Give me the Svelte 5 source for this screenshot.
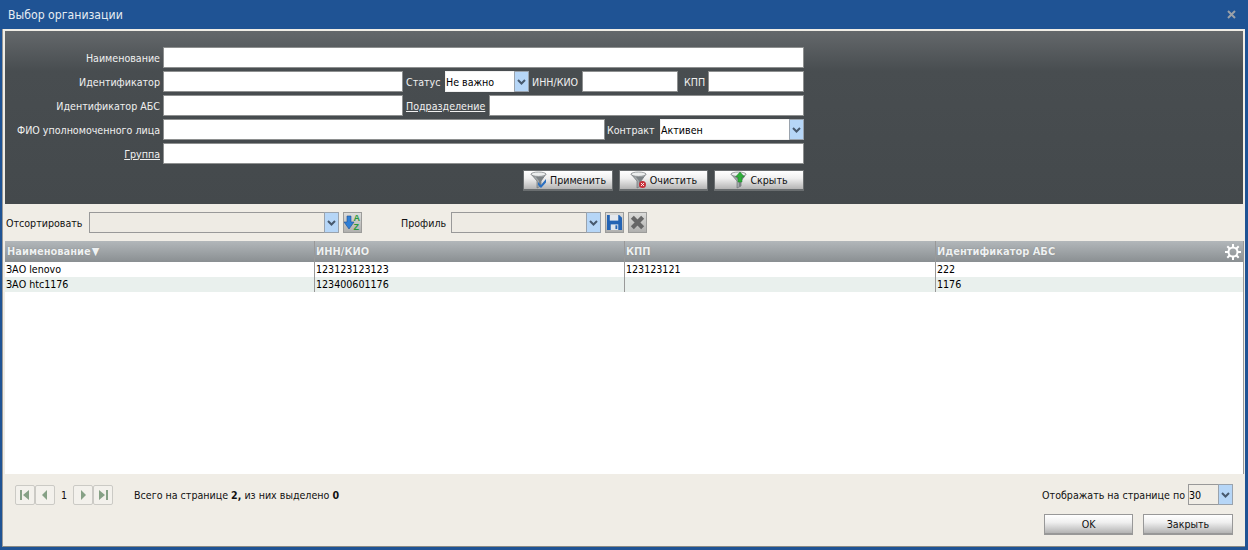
<script>
  const columns = ["ИНН/КИО", "КПП", "Идентификатор АБС"];
  const rows = [
    ["ЗАО lenovo", "123123123123", "123123121", "222"],
    ["ЗАО htc1176", "123400601176", "", "1176"],
  ];
</script>

{#snippet dropdown(cls, value, disabled)}
  <div class="select {cls}" class:disabled>
    <span class="value">{value}</span>
    <span class="arrow">
      <svg width="9" height="6" viewBox="0 0 9 6"><path d="M1 1l3.500 3.500L8 1" fill="none" stroke="#47596e" stroke-width="2" /></svg>
    </span>
  </div>
{/snippet}

{#snippet funnel()}
  <path d="M1 3h15l-5 7v5l-4 2v-7z" fill="#a3a8ab" stroke="#6d7275" stroke-width=".7" />
  <path d="M6 6l3 4v6l2-1v-5l3-4z" fill="#7c8285" />
  <ellipse cx="8.500" cy="3.200" rx="7.500" ry="2.200" fill="#eceeee" stroke="#777b7e" stroke-width=".7" />
{/snippet}

<div class="window">
  <div class="title">
    <span>Выбор организации</span>
    <svg class="close" width="9" height="9" viewBox="0 0 9 9"><path d="M1 1l7 7M8 1l-7 7" stroke="#9aa0a8" stroke-width="2" /></svg>
  </div>

  <div class="body">
    <div class="filter">
      <div class="form">
        <div class="row">
          <span class="label main">Наименование</span>
          <input class="grow" />
        </div>
        <div class="row">
          <span class="label main">Идентификатор</span>
          <input class="w240" />
          <span class="label status">Статус</span>
          {@render dropdown("w84 white", "Не важно", false)}
          <span class="label inn">ИНН/КИО</span>
          <input class="w96" />
          <span class="label kpp">КПП</span>
          <input class="w96" />
        </div>
        <div class="row">
          <span class="label main">Идентификатор АБС</span>
          <input class="w240" />
          <a class="label division" href="#top">Подразделение</a>
          <input class="grow" />
        </div>
        <div class="row">
          <span class="label main">ФИО уполномоченного лица</span>
          <input class="w442" />
          <span class="label contract">Контракт</span>
          {@render dropdown("grow white", "Активен", false)}
        </div>
        <div class="row">
          <a class="label main" href="#top">Группа</a>
          <input class="grow" />
        </div>
        <div class="actions">
          <button class="btn dark">
            <svg width="18" height="18" viewBox="0 0 18 18">
              {@render funnel()}
              <path d="M8 11l3 3 5-6v3.500L11 17l-3-3z" fill="#2a6fc0" />
            </svg>
            Применить
          </button>
          <button class="btn dark narrow">
            <svg width="18" height="18" viewBox="0 0 18 18">
              {@render funnel()}
              <circle cx="12.500" cy="13.500" r="3.500" fill="#c8303a" />
              <path d="M11 12l3 3M14 12l-3 3" stroke="#fff" stroke-width=".9" />
            </svg>
            Очистить
          </button>
          <button class="btn dark">
            <svg width="18" height="18" viewBox="0 0 18 18">
              {@render funnel()}
              <path d="M10 1l4.500 5H12v5H8V6H5.500z" fill="#2fae3a" stroke="#1d7d28" stroke-width=".5" />
            </svg>
            Скрыть
          </button>
        </div>
      </div>
    </div>

    <div class="toolbar">
      <span class="sort-label">Отсортировать</span>
      {@render dropdown("w250", "", true)}
      <button class="tool">
        <svg width="17" height="19" viewBox="0 0 17 19">
          <path d="M3 3h4v6h3l-5 7-5-7h3z" fill="#2f7fd6" stroke="#1d4f96" stroke-width=".6" />
          <text x="9.500" y="8" class="az">A</text>
          <text x="9.500" y="17" class="az">Z</text>
        </svg>
      </button>
      <span class="profile-label">Профиль</span>
      {@render dropdown("w150", "", true)}
      <button class="tool">
        <svg width="15" height="15" viewBox="0 0 16 16">
          <path d="M0 0h13l3 3v13H0z" fill="#2464b4" />
          <path d="M3 0h9v6H3z" fill="#e4e8ee" />
          <path d="M4 10h8v6H4z" fill="#dfe5ec" />
          <path d="M9 11h2v4H9z" fill="#2464b4" />
        </svg>
      </button>
      <button class="tool">
        <svg width="15" height="15" viewBox="0 0 16 16"><path d="M2.500 2.500l11 11M13.500 2.500l-11 11" stroke="#666" stroke-width="4.500" /></svg>
      </button>
    </div>

    <div class="grid">
      <div class="head">
        <div class="cell c1">Наименование<span class="sort">▼</span></div>
        {#each columns as col}
          <div class="cell">{col}</div>
        {/each}
        <svg class="gear" width="16" height="16" viewBox="0 0 16 16">
          <circle cx="8" cy="8" r="4.500" fill="none" stroke="#fff" stroke-width="2" />
          <path d="M8 0v3M8 13v3M0 8h3M13 8h3M2.300 2.300l2.200 2.200M11.500 11.500l2.200 2.200M13.700 2.300l-2.200 2.200M4.500 11.500l-2.200 2.200" stroke="#fff" stroke-width="2" />
        </svg>
      </div>
      {#each rows as row, i}
        <div class="line" class:alt={i % 2 === 1}>
          {#each row as value, j}
            <div class="cell" class:c1={j === 0}>{value}</div>
          {/each}
        </div>
      {/each}
    </div>

    <div class="footer">
      <div class="pager-row">
        <div class="pager">
          <button class="page">
            <svg width="10" height="10" viewBox="0 0 10 10"><path d="M0 0h2v10H0zM9 0v10L3 5z" fill="#86a186" /></svg>
          </button>
          <button class="page">
            <svg width="10" height="10" viewBox="0 0 10 10"><path d="M7 0v10L2 5z" fill="#86a186" /></svg>
          </button>
          <span class="num">1</span>
          <button class="page">
            <svg width="10" height="10" viewBox="0 0 10 10"><path d="M3 0v10l5-5z" fill="#86a186" /></svg>
          </button>
          <button class="page">
            <svg width="10" height="10" viewBox="0 0 10 10"><path d="M1 0v10l6-5zM8 0h2v10H8z" fill="#86a186" /></svg>
          </button>
        </div>
        <span class="total">Всего на странице <b>2,</b> из них выделено <b>0</b></span>
        <span class="per-page">Отображать на странице по</span>
        {@render dropdown("w45", "30", false)}
      </div>
      <div class="buttons">
        <button class="btn light narrow">OK</button>
        <button class="btn light">Закрыть</button>
      </div>
    </div>
  </div>
</div>

<style>
  :global(body) {
    margin: 0;
    background: #1f5394;
  }

  .window {
    width: 1248px;
    height: 550px;
    display: flex;
    flex-direction: column;
    background: #1f5394;
    font-family: "DejaVu Sans Condensed", "DejaVu Sans", sans-serif;
    font-stretch: condensed;
    font-size: 10.6px;
    color: #111;
  }

  .title {
    height: 29px;
    flex: none;
    display: flex;
    align-items: center;
    justify-content: space-between;
    padding: 0 12px 0 8px;
    color: #e6ecf2;
    font-size: 12.2px;
  }

  .body {
    flex: 1;
    display: flex;
    flex-direction: column;
    margin: 0 3px 3px 2px;
    padding: 2px 2px 0 2px;
    background: #f0ede6;
    border-left: 1px solid #999;
    border-bottom: 1px solid #8a8a84;
    box-sizing: border-box;
    min-height: 0;
  }

  .filter {
    height: 173px;
    flex: none;
    box-sizing: border-box;
    padding: 16px 0 0 0;
    background: linear-gradient(#64686b, #484d50 40px, #44494c);
  }

  .form {
    width: 799px;
    display: flex;
    flex-direction: column;
    gap: 3px;
  }

  .row {
    display: flex;
    height: 21px;
    align-items: center;
  }

  .label {
    color: #f0f0f0;
    white-space: nowrap;
  }

  .main {
    width: 155px;
    flex: none;
    text-align: right;
    margin-right: 3px;
  }

  .status {
    width: 36px;
    margin: 0 3px;
  }

  .division {
    width: 80px;
    margin: 0 3px;
  }

  .inn {
    width: 47px;
    margin: 0 3px;
  }

  .kpp {
    width: 21px;
    margin: 0 3px 0 6px;
  }

  .contract {
    width: 50px;
    margin: 0 3px 0 2px;
  }

  input {
    height: 21px;
    box-sizing: border-box;
    border: 1px solid #8e9090;
    background: #fff;
    padding: 0 2px;
    margin: 0;
    outline: none;
    flex: none;
  }

  .grow {
    flex: 1;
    min-width: 0;
  }

  .w240 {
    width: 240px;
  }

  .w96 {
    width: 96px;
  }

  .w442 {
    width: 442px;
  }

  .actions {
    display: flex;
    justify-content: flex-end;
    gap: 6px;
    margin-top: 3px;
  }

  .select {
    height: 21px;
    box-sizing: border-box;
    display: flex;
    align-items: center;
    border: 1px solid #999;
    flex: none;
  }

  .select.grow {
    flex: 1;
  }

  .select.white {
    border-color: #f0f0f0;
    background: #fff;
  }

  .select.disabled {
    background: #eeebe4;
  }

  .w84 {
    width: 84px;
  }

  .w250 {
    width: 250px;
  }

  .w150 {
    width: 150px;
  }

  .w45 {
    width: 45px;
  }

  .value {
    flex: 1;
    white-space: nowrap;
    color: #000;
  }

  .arrow {
    width: 15px;
    align-self: stretch;
    margin: -1px -1px -1px 0;
    display: flex;
    align-items: center;
    justify-content: center;
    background: #b6d6f7;
    border: 1px solid #9aa3ad;
    box-sizing: border-box;
  }

  .btn {
    height: 21px;
    width: 90px;
    display: flex;
    align-items: center;
    justify-content: center;
    gap: 2px;
    padding: 0;
    font: inherit;
    color: #111;
    box-sizing: border-box;
    background: linear-gradient(#fff, #f0f0f0 40%, #b4b4b4);
    border: 2px solid #8f8f8f;
    border-width: 1px 1px 2px 1px;
  }

  .btn.narrow {
    width: 89px;
  }

  .btn.dark {
    border-color: #6a6e70;
  }

  .btn.light {
    border-color: #989898;
  }

  .toolbar {
    height: 37px;
    flex: none;
    display: flex;
    align-items: center;
  }

  .sort-label {
    width: 84px;
    margin-left: 1px;
    margin-right: -1px;
  }

  .tool {
    width: 19px;
    height: 21px;
    padding: 0;
    margin-left: 4px;
    display: flex;
    align-items: center;
    justify-content: center;
    background: linear-gradient(#dcdcda, #b0b0ae);
    border: 1px solid #9c9c9a;
    box-sizing: border-box;
  }

  .az {
    font-size: 9px;
    font-weight: bold;
    fill: #2a9a3a;
  }

  .profile-label {
    margin-left: 39px;
    width: 50px;
  }

  .grid {
    flex: 1;
    min-height: 0;
    background: #fff;
    margin-right: -1px;
    border-right: 1px solid #999;
  }

  .head,
  .line {
    display: grid;
    grid-template-columns: 309px 310px 311px 1fr;
  }

  .head {
    position: relative;
    height: 21px;
    background: linear-gradient(#b2b7ba, #8a8f92);
    color: #eef1f2;
    font-size: 11px;
    font-weight: bold;
  }

  .head .cell {
    line-height: 21px;
    text-shadow: 0 0 1px #777;
  }

  .head .cell.c1 {
    padding-left: 2px;
  }

  .line {
    height: 15px;
    line-height: 15px;
    color: #000;
  }

  .line.alt {
    background: #e9f0ed;
  }

  .cell {
    padding-left: 1px;
    border-left: 1px solid #999;
    white-space: nowrap;
    overflow: hidden;
  }

  .cell.c1 {
    border-left: none;
  }

  .sort {
    margin-left: 1px;
  }

  .gear {
    position: absolute;
    right: 2px;
    top: 3px;
  }

  .footer {
    height: 72px;
    flex: none;
    box-sizing: border-box;
    padding: 10px 10px 0 10px;
  }

  .pager-row {
    display: flex;
    align-items: center;
    height: 21px;
  }

  .pager {
    display: flex;
    align-items: center;
  }

  .page {
    width: 20px;
    height: 20px;
    padding: 0;
    display: flex;
    align-items: center;
    justify-content: center;
    background: #f3f1ec;
    border: 1px solid #cbcac5;
    border-radius: 2px;
    box-sizing: border-box;
  }

  .num {
    width: 18px;
    text-align: center;
  }

  .total {
    margin-left: 21px;
    flex: 1;
  }

  .per-page {
    margin-right: 3px;
  }

  .buttons {
    display: flex;
    justify-content: flex-end;
    gap: 10px;
    margin-top: 9px;
  }
</style>
